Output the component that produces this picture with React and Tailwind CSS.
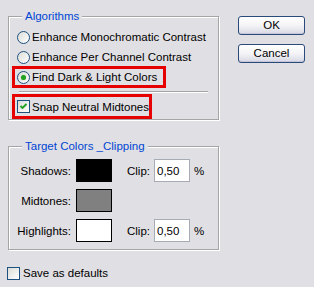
import React from "react";

const font = { fontFamily: '"Liberation Sans", Arial, sans-serif' };

function Radio({ checked }) {
  return (
    <div className="w-[13px] h-[13px] rounded-full border border-[#1c5180] bg-gradient-to-br from-[#dcdcd7] to-white flex items-center justify-center shrink-0">
      {checked && (
        <div className="w-[5px] h-[5px] rounded-full bg-[#21a121] shadow-[0_0_1px_#7fd07f]" />
      )}
    </div>
  );
}

function Check({ checked }) {
  return (
    <div className="w-[13px] h-[13px] border border-[#1c5180] bg-gradient-to-br from-[#dcdcd7] to-white flex items-center justify-center shrink-0">
      {checked && (
        <svg width="9" height="9" viewBox="0 0 9 9">
          <path d="M1.5 4 L3.5 6 L7.5 2" stroke="#21a121" strokeWidth="1.8" fill="none" />
        </svg>
      )}
    </div>
  );
}

function GroupLabel({ children }) {
  return (
    <div className="-mt-[8px] ml-[13px] px-[3px] bg-[#e0dfe3] w-fit text-[#0046d5] leading-[14px] h-[14px]">
      {children}
    </div>
  );
}

function Swatch({ color }) {
  return <div className={`w-[36px] h-[23px] border border-black ${color}`} />;
}

function ClipInput() {
  return (
    <div className="flex items-center">
      <span className="ml-[15px] w-[27px]">Clip:</span>
      <div className="w-[36px] h-[23px] border border-[#a5acb5] bg-white pl-[2px] flex items-center">0,50</div>
      <span className="ml-[4px]">%</span>
    </div>
  );
}

function XPButton({ children }) {
  return (
    <div className="w-[67px] h-[19px] rounded-[3px] border border-[#2a4a7a] bg-gradient-to-b from-white via-[#f4f4f6] to-[#d8d8e6] flex items-center justify-center leading-none shadow-[inset_0_-1px_0_#c6c5d7]">
      {children}
    </div>
  );
}

export default function App() {
  return (
    <div
      className="w-[314px] h-[287px] bg-[#e0dfe3] text-black text-[11.5px] leading-[14px] overflow-hidden"
      style={font}
    >
      <div className="flex">
        <div className="pl-[8px] w-[220px] shrink-0">
          {/* Algorithms */}
          <div className="mt-[16px] w-[211px] border border-[#a5a5a5] shadow-[inset_1px_1px_0_#fff,1px_1px_0_#fff]">
            <GroupLabel>Algorithms</GroupLabel>
            <div className="mt-[4px]">
              <div className="h-[20px] flex items-center pl-[8px] gap-[2px]">
                <Radio />
                <span>Enhance Monochromatic Contrast</span>
              </div>
              <div className="h-[20px] flex items-center pl-[8px] gap-[2px]">
                <Radio />
                <span>Enhance Per Channel Contrast</span>
              </div>
              <div className="-mt-[1px] ml-[3px] w-[154px] h-[22px] border-[3px] border-[#e60000] flex items-center pl-[2px] gap-[2px]">
                <Radio checked />
                <span>Find Dark &amp; Light Colors</span>
              </div>
              <div className="mt-[3px] mx-[10px] h-[2px] border-t border-[#a5a5a5] border-b border-b-white" />
              <div className="mt-[1px] ml-[3px] w-[140px] h-[25px] border-[3px] border-[#e60000] flex items-center pl-[2px] gap-[2px]">
                <Check checked />
                <span>Snap Neutral Midtones</span>
              </div>
            </div>
          </div>

          {/* Target Colors */}
          <div className="mt-[26px] w-[211px] h-[104px] border border-[#a5a5a5] shadow-[inset_1px_1px_0_#fff,1px_1px_0_#fff]">
            <GroupLabel>Target Colors _Clipping</GroupLabel>
            <div className="mt-[6px] flex flex-col gap-[7px]">
              <div className="flex items-center h-[23px]">
                <span className="w-[67px] text-right pr-[5px]">Shadows:</span>
                <Swatch color="bg-black" />
                <ClipInput />
              </div>
              <div className="flex items-center h-[23px]">
                <span className="w-[67px] text-right pr-[5px]">Midtones:</span>
                <Swatch color="bg-[#808080]" />
              </div>
              <div className="flex items-center h-[23px]">
                <span className="w-[67px] text-right pr-[5px]">Highlights:</span>
                <Swatch color="bg-white" />
                <ClipInput />
              </div>
            </div>
          </div>
        </div>

        <div className="ml-[18px] pt-[16px] flex flex-col gap-[9px]">
          <XPButton>OK</XPButton>
          <XPButton>Cancel</XPButton>
        </div>
      </div>

      <div className="mt-[16px] ml-[7px] flex items-center gap-[3px]">
        <Check />
        <span>Save as defaults</span>
      </div>
    </div>
  );
}
